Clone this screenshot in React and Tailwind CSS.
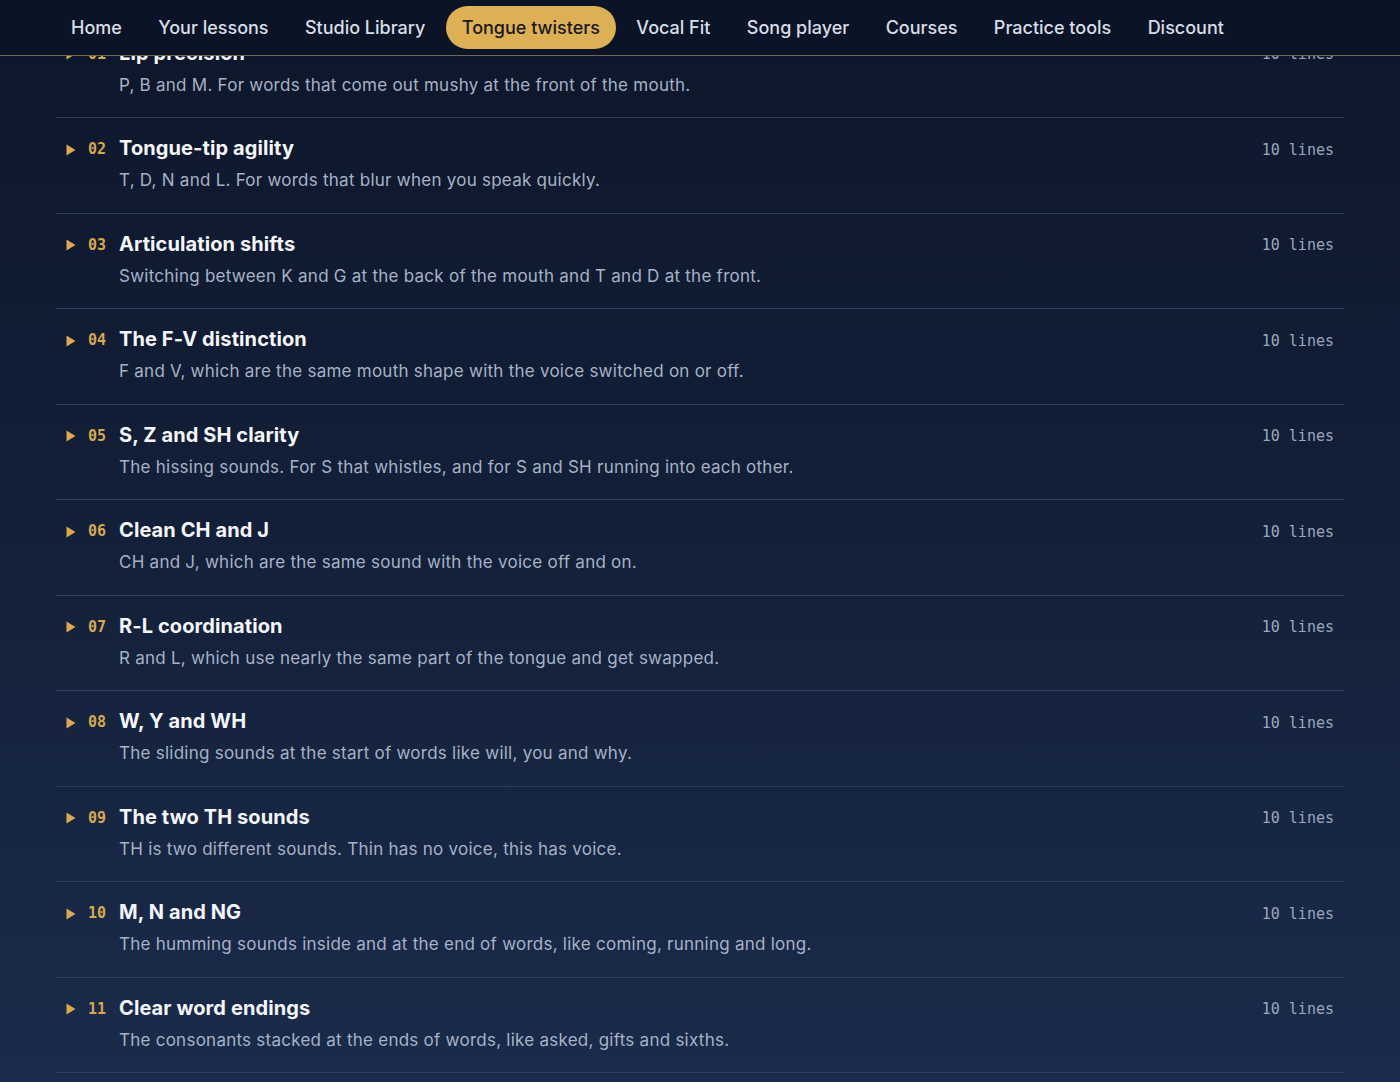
import React from "react";

const navItems = [
  "Home",
  "Your lessons",
  "Studio Library",
  "Tongue twisters",
  "Vocal Fit",
  "Song player",
  "Courses",
  "Practice tools",
  "Discount",
];

const drills = [
  ["01", "Lip precision", "P, B and M. For words that come out mushy at the front of the mouth."],
  ["02", "Tongue-tip agility", "T, D, N and L. For words that blur when you speak quickly."],
  ["03", "Articulation shifts", "Switching between K and G at the back of the mouth and T and D at the front."],
  ["04", "The F-V distinction", "F and V, which are the same mouth shape with the voice switched on or off."],
  ["05", "S, Z and SH clarity", "The hissing sounds. For S that whistles, and for S and SH running into each other."],
  ["06", "Clean CH and J", "CH and J, which are the same sound with the voice off and on."],
  ["07", "R-L coordination", "R and L, which use nearly the same part of the tongue and get swapped."],
  ["08", "W, Y and WH", "The sliding sounds at the start of words like will, you and why."],
  ["09", "The two TH sounds", "TH is two different sounds. Thin has no voice, this has voice."],
  ["10", "M, N and NG", "The humming sounds inside and at the end of words, like coming, running and long."],
  ["11", "Clear word endings", "The consonants stacked at the ends of words, like asked, gifts and sixths."],
];

const sans = { fontFamily: "Inter, 'Noto Sans', sans-serif" };
const mono = { fontFamily: "'DejaVu Sans Mono', 'Liberation Mono', monospace" };

function Caret() {
  return (
    <svg width="10" height="12" viewBox="0 0 10 12" className="shrink-0">
      <polygon points="0.5,0.5 9.5,6 0.5,11.5" fill="#dcaa48" />
    </svg>
  );
}

function DrillRow({ num, title, desc }) {
  return (
    <li className="flex items-start border-b border-[#2d3d5a] pl-[10px] pr-[10px] pt-4 pb-[19.5px]">
      <div className="flex h-7 items-center gap-[12px] pt-[3px]">
        <Caret />
        <span className="w-[19px] text-[15px] font-semibold text-[#d6a94c]" style={mono}>
          {num}
        </span>
      </div>
      <div className="ml-[12px] flex-1">
        <div className="text-[20px] font-bold leading-7 tracking-[0.1px] text-[#f4f6f9]">{title}</div>
        <div className="mt-1.5 text-[17px] leading-[25px] tracking-[0.25px] text-[#a7b2c5]">{desc}</div>
      </div>
      <div className="flex h-7 items-center pt-[4px] text-[15px] text-[#9aa7bc]" style={mono}>
        10 lines
      </div>
    </li>
  );
}

export default function App() {
  return (
    <div
      className="relative h-[1082px] w-full overflow-hidden bg-gradient-to-b from-[#0d172b] via-[#132039] to-[#1a2b4b]"
      style={sans}
    >
      <nav className="fixed inset-x-0 top-0 z-10 h-[56px] border-b border-[#6f6750] bg-[#0b1427]">
        <ul className="flex h-[55px] items-center gap-[4.4px] pl-[55px]">
          {navItems.map((item) => {
            const active = item === "Tongue twisters";
            return (
              <li key={item}>
                <span
                  className={
                    active
                      ? "block rounded-full bg-[#ddb053] px-4 py-[7.5px] text-[18px] font-medium leading-7 text-[#17181b]"
                      : "block rounded-full px-4 py-[7.5px] text-[18px] font-medium leading-7 text-[#d9dee6]"
                  }
                >
                  {item}
                </span>
              </li>
            );
          })}
        </ul>
      </nav>

      <main className="px-14 pt-[22.5px]">
        <ul>
          {drills.map(([num, title, desc]) => (
            <DrillRow key={num} num={num} title={title} desc={desc} />
          ))}
        </ul>
      </main>
    </div>
  );
}
